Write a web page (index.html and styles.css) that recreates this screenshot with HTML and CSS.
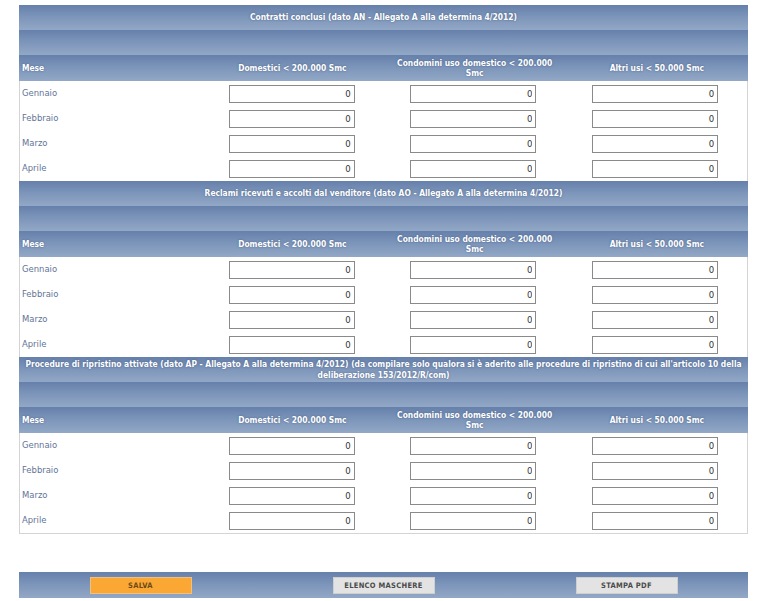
FILE: index.html
```html
<!DOCTYPE html>
<html>
<head>
<meta charset="utf-8">
<link rel="stylesheet" href="styles.css">
</head>
<body>
<div class="page">
  <div class="panel">
    <section class="sec">
      <div class="title">Contratti conclusi (dato AN - Allegato A alla determina 4/2012)</div>
      <div class="blank"></div>
      <div class="colhdr">
        <div class="c mese">Mese</div>
        <div class="c">Domestici &lt; 200.000 Smc</div>
        <div class="c">Condomini uso domestico &lt; 200.000 Smc</div>
        <div class="c">Altri usi &lt; 50.000 Smc</div>
      </div>
      <div class="row"><div class="lab">Gennaio</div><div class="cell"><input value="0"></div><div class="cell"><input value="0"></div><div class="cell"><input value="0"></div></div>
      <div class="row"><div class="lab">Febbraio</div><div class="cell"><input value="0"></div><div class="cell"><input value="0"></div><div class="cell"><input value="0"></div></div>
      <div class="row"><div class="lab">Marzo</div><div class="cell"><input value="0"></div><div class="cell"><input value="0"></div><div class="cell"><input value="0"></div></div>
      <div class="row"><div class="lab">Aprile</div><div class="cell"><input value="0"></div><div class="cell"><input value="0"></div><div class="cell"><input value="0"></div></div>
    </section>
    <section class="sec">
      <div class="title">Reclami ricevuti e accolti dal venditore (dato AO - Allegato A alla determina 4/2012)</div>
      <div class="blank"></div>
      <div class="colhdr">
        <div class="c mese">Mese</div>
        <div class="c">Domestici &lt; 200.000 Smc</div>
        <div class="c">Condomini uso domestico &lt; 200.000 Smc</div>
        <div class="c">Altri usi &lt; 50.000 Smc</div>
      </div>
      <div class="row"><div class="lab">Gennaio</div><div class="cell"><input value="0"></div><div class="cell"><input value="0"></div><div class="cell"><input value="0"></div></div>
      <div class="row"><div class="lab">Febbraio</div><div class="cell"><input value="0"></div><div class="cell"><input value="0"></div><div class="cell"><input value="0"></div></div>
      <div class="row"><div class="lab">Marzo</div><div class="cell"><input value="0"></div><div class="cell"><input value="0"></div><div class="cell"><input value="0"></div></div>
      <div class="row"><div class="lab">Aprile</div><div class="cell"><input value="0"></div><div class="cell"><input value="0"></div><div class="cell"><input value="0"></div></div>
    </section>
    <section class="sec">
      <div class="title">Procedure di ripristino attivate (dato AP - Allegato A alla determina 4/2012) (da compilare solo qualora si è aderito alle procedure di ripristino di cui all'articolo 10 della deliberazione 153/2012/R/com)</div>
      <div class="blank"></div>
      <div class="colhdr">
        <div class="c mese">Mese</div>
        <div class="c">Domestici &lt; 200.000 Smc</div>
        <div class="c">Condomini uso domestico &lt; 200.000 Smc</div>
        <div class="c">Altri usi &lt; 50.000 Smc</div>
      </div>
      <div class="row"><div class="lab">Gennaio</div><div class="cell"><input value="0"></div><div class="cell"><input value="0"></div><div class="cell"><input value="0"></div></div>
      <div class="row"><div class="lab">Febbraio</div><div class="cell"><input value="0"></div><div class="cell"><input value="0"></div><div class="cell"><input value="0"></div></div>
      <div class="row"><div class="lab">Marzo</div><div class="cell"><input value="0"></div><div class="cell"><input value="0"></div><div class="cell"><input value="0"></div></div>
      <div class="row"><div class="lab">Aprile</div><div class="cell"><input value="0"></div><div class="cell"><input value="0"></div><div class="cell"><input value="0"></div></div>
    </section>
  </div>
  <div class="bar">
    <div class="bcell"><button class="btn save">SALVA</button></div>
    <div class="bcell"><button class="btn">ELENCO MASCHERE</button></div>
    <div class="bcell"><button class="btn">STAMPA PDF</button></div>
  </div>
</div>
</body>
</html>
```

FILE: styles.css
```css
html, body {
  margin: 0;
  padding: 0;
  background: #ffffff;
}
.page {
  padding: 5px 0 0 19px;
  width: 729px;
  font-family: "DejaVu Sans Condensed", "DejaVu Sans", sans-serif;
}
.panel {
  border-left: 1px solid #d4d4d4;
  border-right: 1px solid #d4d4d4;
  border-bottom: 1px solid #d4d4d4;
}
.title, .blank, .colhdr {
  background: linear-gradient(to bottom, #6580ab 0%, #7b94b9 45%, #93a8c6 100%);
  color: #ffffff;
  font-weight: bold;
  font-size: 8.4px;
  text-shadow: 0 0 2px rgba(40, 60, 100, 0.6);
  margin: 0 -1px;
}
.title {
  height: 25px;
  display: flex;
  align-items: center;
  justify-content: center;
  text-align: center;
  line-height: 11px;
  padding: 0 6px;
}
.blank {
  height: 25px;
}
.colhdr {
  height: 26px;
  display: grid;
  grid-template-columns: repeat(4, 1fr);
}
.colhdr .c {
  display: flex;
  align-items: center;
  justify-content: center;
  text-align: center;
  line-height: 10px;
  padding: 0 9px;
}
.colhdr .mese {
  justify-content: flex-start;
  padding: 0 3px;
}
.row {
  height: 25px;
  display: grid;
  grid-template-columns: repeat(4, 1fr);
  align-items: center;
}
.lab {
  color: #5f7497;
  font-size: 9.4px;
  padding-left: 2px;
  padding-bottom: 2px;
}
.cell {
  display: flex;
  justify-content: center;
}
.cell input {
  width: 126px;
  height: 18px;
  box-sizing: border-box;
  border: 1px solid #8a8a8a;
  text-align: right;
  font-family: "DejaVu Sans Condensed", "DejaVu Sans", sans-serif;
  font-size: 9.5px;
  color: #333333;
  padding: 0 3px;
  margin: 0 0 0 -2px;
  background: #ffffff;
}
.bar {
  margin-top: 38px;
  height: 26px;
  display: grid;
  grid-template-columns: repeat(3, 1fr);
  align-items: center;
  background: linear-gradient(to bottom, #6580ab 0%, #7b94b9 45%, #93a8c6 100%);
}
.bcell {
  display: flex;
  justify-content: center;
}
.btn {
  width: 102px;
  height: 17px;
  box-sizing: border-box;
  border: 1px solid #cfcfcf;
  background: #e3e3e3;
  color: #4a4a4a;
  font-family: "DejaVu Sans Condensed", "DejaVu Sans", sans-serif;
  font-size: 7.5px;
  font-weight: bold;
  letter-spacing: 0.3px;
  padding: 0;
  margin: 0;
}
.btn.save {
  background: #fba733;
  border-color: #f0c080;
  color: #6b4a1a;
}
```
